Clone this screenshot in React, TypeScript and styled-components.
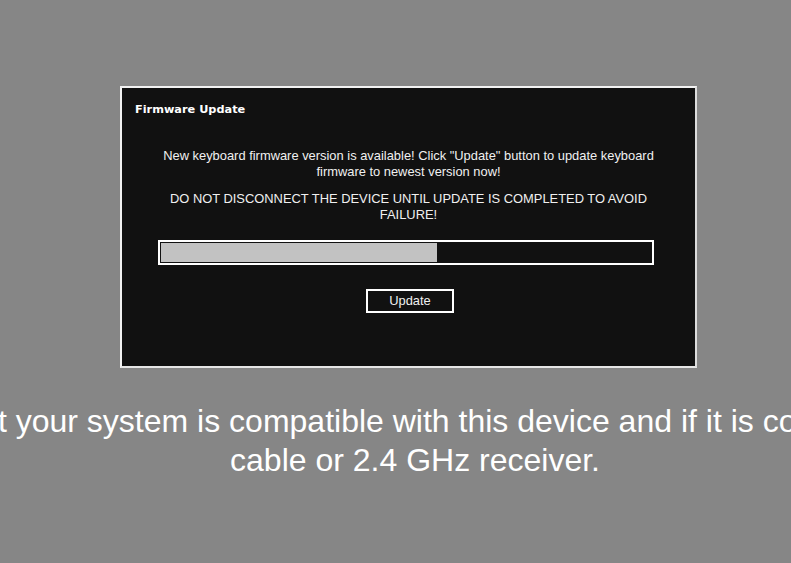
import React from "react";
import styled, { createGlobalStyle } from "styled-components";

const GlobalStyle = createGlobalStyle`
  html, body {
    margin: 0;
    padding: 0;
    background: #868686;
    overflow: hidden;
  }
  body {
    font-family: "Liberation Sans", Arial, sans-serif;
  }
`;

const Page = styled.div`
  width: 791px;
  height: 563px;
  padding-top: 86px;
  box-sizing: border-box;
  background: #868686;
  overflow: hidden;
`;

const Dialog = styled.div`
  margin-left: 120px;
  width: 577px;
  height: 282px;
  box-sizing: border-box;
  background: #111111;
  border: 2px solid #f2f2f2;
  border-right-color: #dcdcdc;
  border-bottom-color: #e6e6e6;
  padding: 15px 0 0 0;
  display: flex;
  flex-direction: column;
`;

const Title = styled.div`
  padding-left: 13px;
  font-family: "DejaVu Sans", Tahoma, sans-serif;
  font-weight: bold;
  font-size: 11.3px;
  line-height: 14px;
  color: #ffffff;
`;

const Message = styled.p<{ $top: number }>`
  margin: ${(p) => p.$top}px auto 0;
  width: 510px;
  text-align: center;
  font-size: 12.9px;
  line-height: 16px;
  color: #f0f0f0;
`;

const Progress = styled.div`
  margin: 17px 0 0 36px;
  width: 496px;
  height: 25px;
  box-sizing: border-box;
  border: 2px solid #ffffff;
  padding: 1px;
  background: #111111;
`;

const Fill = styled.div`
  height: 100%;
  background: #c2c2c2;
`;

const ButtonRow = styled.div`
  display: flex;
  margin: 24px 0 0 244px;
`;

const Button = styled.button`
  width: 88px;
  height: 24px;
  box-sizing: border-box;
  border: 2px solid #ffffff;
  background: #111111;
  color: #f0f0f0;
  font-family: "Liberation Sans", Arial, sans-serif;
  font-size: 12.9px;
  line-height: 18px;
  padding: 0;
  cursor: pointer;
`;

const Notice = styled.div`
  display: flex;
  justify-content: center;
  width: 791px;
  box-sizing: border-box;
  padding-left: 39px;
  margin-top: 34px;
`;

const NoticeText = styled.div`
  flex: none;
  white-space: nowrap;
  text-align: center;
  font-family: "Liberation Sans", Arial, sans-serif;
  font-size: 32px;
  line-height: 39px;
  color: #ffffff;
`;

export default function App() {
  const progress = 56.4;
  return (
    <>
      <GlobalStyle />
      <Page>
        <Dialog>
          <Title>Firmware Update</Title>
          <Message $top={31}>
            New keyboard firmware version is available! Click "Update" button to update keyboard
            firmware to newest version now!
          </Message>
          <Message $top={11}>
            DO NOT DISCONNECT THE DEVICE UNTIL UPDATE IS COMPLETED TO AVOID FAILURE!
          </Message>
          <Progress>
            <Fill style={{ width: `${progress}%` }} />
          </Progress>
          <ButtonRow>
            <Button>Update</Button>
          </ButtonRow>
        </Dialog>
        <Notice>
          <NoticeText>
            Make sure that your system is compatible with this device and if it is connected via USB
            <br />
            cable or 2.4 GHz receiver.
          </NoticeText>
        </Notice>
      </Page>
    </>
  );
}
